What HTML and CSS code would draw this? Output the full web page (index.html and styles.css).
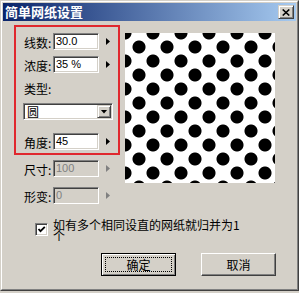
FILE: index.html
```html
<!DOCTYPE html>
<html lang="zh-CN">
<head>
  <meta charset="UTF-8" />
  <meta name="viewport" content="width=device-width, initial-scale=1.0"/>
  <title>简单网纸设置</title>
  <link rel="stylesheet" href="styles.css">
</head>
<body>

  <div class="window">
    <div class="frame">
      <div class="titlebar">
        <span class="title">简单网纸设置</span>
        <button class="close-btn" aria-label="关闭">
          <svg class="close-icon" viewBox="0 0 8 7">
            <path d="M0.7 0.5 L7.3 6.5 M7.3 0.5 L0.7 6.5"></path>
          </svg>
        </button>
      </div>

      <div class="content">
        <div class="main">
          <div class="left-col">
            <div class="group">
              <div class="row">
                <span class="label">线数:</span>
                <div class="field">30.0</div>
                <span class="arrow"></span>
              </div>
              <div class="row mt-6">
                <span class="label">浓度:</span>
                <div class="field">35 %</div>
                <span class="arrow"></span>
              </div>
              <div class="row mt-6">
                <span class="label">类型:</span>
              </div>
              <div class="select">
                <span class="select-text">圆</span>
                <span class="select-btn"><span class="down"></span></span>
              </div>
              <div class="row mt-13">
                <span class="label">角度:</span>
                <div class="field">45</div>
                <span class="arrow"></span>
              </div>
            </div>

            <div class="row outer mt-5">
              <span class="label">尺寸:</span>
              <div class="field disabled">100</div>
              <span class="arrow disabled"></span>
            </div>
            <div class="row outer mt-10">
              <span class="label">形变:</span>
              <div class="field disabled">0</div>
              <span class="arrow disabled"></span>
            </div>
          </div>

          <div class="preview"></div>
        </div>

        <div class="check-row">
          <span class="checkbox">
            <svg class="check-icon" viewBox="0 0 9 9">
              <polyline points="1.5,4 3.5,6.2 7.8,1.8"></polyline>
            </svg>
          </span>
          <span class="check-text">如有多个相同设直的网纸就归并为1个</span>
        </div>

        <div class="buttons">
          <button class="btn btn-default">确定</button>
          <button class="btn">取消</button>
        </div>
      </div>
    </div>
  </div>

</body>
</html>
```

FILE: styles.css
```css
* {
  margin: 0;
  padding: 0;
  box-sizing: border-box;
}

body {
  background: #d4d0c8;
  font-family: "Noto Sans CJK SC", sans-serif;
  font-size: 12px;
  color: #000;
}

/* window frame */
.window {
  width: 299px;
  height: 291px;
  border: 1px solid;
  border-color: #d4d0c8 #404040 #404040 #d4d0c8;
}

.frame {
  height: 100%;
  border: 1px solid;
  border-color: #fff #808080 #808080 #fff;
  padding: 1px;
}

.titlebar {
  height: 18px;
  display: flex;
  align-items: center;
  justify-content: space-between;
  padding: 0 2px;
  background: linear-gradient(to right, #0a246a, #a6caf0);
}

.title {
  color: #fff;
  font-weight: bold;
  font-size: 13px;
  line-height: 18px;
}

.close-btn {
  width: 16px;
  height: 14px;
  display: flex;
  align-items: center;
  justify-content: center;
  background: #d4d0c8;
  border: 1px solid;
  border-color: #d4d0c8 #404040 #404040 #d4d0c8;
  box-shadow: inset 1px 1px #fff, inset -1px -1px #808080;
}

.close-icon {
  width: 8px;
  height: 7px;
  stroke: #000;
  stroke-width: 1.6;
  fill: none;
}

/* body */
.content {
  padding: 4px 0 0 11px;
}

.main {
  display: flex;
  align-items: flex-start;
  gap: 5px;
}

.left-col {
  width: 106px;
}

.group {
  border: 2px solid #e0282e;
  padding: 6px 0 3px 8px;
}

.row {
  display: flex;
  align-items: center;
  height: 17px;
}

.row.outer {
  padding-left: 10px;
}

.mt-5 { margin-top: 5px; }
.mt-6 { margin-top: 6px; }
.mt-10 { margin-top: 10px; }
.mt-13 { margin-top: 13px; }

.label {
  width: 29px;
  line-height: 17px;
  padding-top: 1px;
  white-space: nowrap;
}

.field {
  width: 46px;
  height: 17px;
  background: #fff;
  border: 1px solid;
  border-color: #808080 #fff #fff #808080;
  box-shadow: inset 1px 1px #404040, inset -1px -1px #d4d0c8;
  font-family: "Liberation Sans", Arial, sans-serif;
  font-size: 11px;
  line-height: 15px;
  padding-left: 2px;
}

.field.disabled {
  background: #d4d0c8;
  color: #808080;
}

.arrow {
  margin-left: 7px;
  width: 4px;
  height: 7px;
  background: #000;
  clip-path: polygon(0 0, 100% 50%, 0 100%);
}

.arrow.disabled {
  background: #808080;
}

.select {
  display: flex;
  align-items: center;
  width: 90px;
  height: 17px;
  margin: 7px 0 0 -1px;
  padding: 2px 2px 2px 3px;
  background: #fff;
  border: 1px solid;
  border-color: #808080 #fff #fff #808080;
  box-shadow: inset 1px 1px #404040, inset -1px -1px #d4d0c8;
}

.select-text {
  flex: 1;
  line-height: 13px;
}

.select-btn {
  width: 14px;
  height: 13px;
  margin-right: -1px;
  display: flex;
  align-items: center;
  justify-content: center;
  background: #d4d0c8;
  border: 1px solid;
  border-color: #d4d0c8 #404040 #404040 #d4d0c8;
  box-shadow: inset 1px 1px #fff, inset -1px -1px #808080;
}

.down {
  width: 7px;
  height: 4px;
  background: #000;
  clip-path: polygon(0 0, 100% 0, 50% 100%);
}

.preview {
  width: 150px;
  height: 150px;
  margin-top: 8px;
  background-color: #fff;
  background-image:
    radial-gradient(circle, #000 6px, transparent 7px),
    radial-gradient(circle, #000 6px, transparent 7px);
  background-size: 28px 28px;
  background-position: -14px -14px, 0 0;
}

/* checkbox */
.check-row {
  display: flex;
  align-items: flex-start;
  margin-top: 15px;
  padding-left: 21px;
}

.checkbox {
  width: 13px;
  height: 13px;
  margin-top: 4px;
  display: flex;
  align-items: center;
  justify-content: center;
  background: #fff;
  border: 1px solid;
  border-color: #808080 #fff #fff #808080;
  box-shadow: inset 1px 1px #404040, inset -1px -1px #d4d0c8;
}

.check-icon {
  width: 9px;
  height: 9px;
  stroke: #000;
  stroke-width: 1.8;
  fill: none;
}

.check-text {
  width: 190px;
  margin-left: 5px;
  line-height: 11px;
}

/* buttons */
.buttons {
  display: flex;
  gap: 25px;
  margin-top: 12px;
  padding-left: 87px;
}

.btn {
  width: 75px;
  height: 23px;
  background: #d4d0c8;
  border: 1px solid;
  border-color: #fff #404040 #404040 #fff;
  box-shadow: inset -1px -1px #808080;
  font-family: "Noto Sans CJK SC", sans-serif;
  font-size: 12px;
  color: #000;
}

.btn-default {
  border-color: #000;
  box-shadow: inset 1px 1px #fff, inset -1px -1px #808080;
  outline: 1px dotted #000;
  outline-offset: -5px;
}
```
